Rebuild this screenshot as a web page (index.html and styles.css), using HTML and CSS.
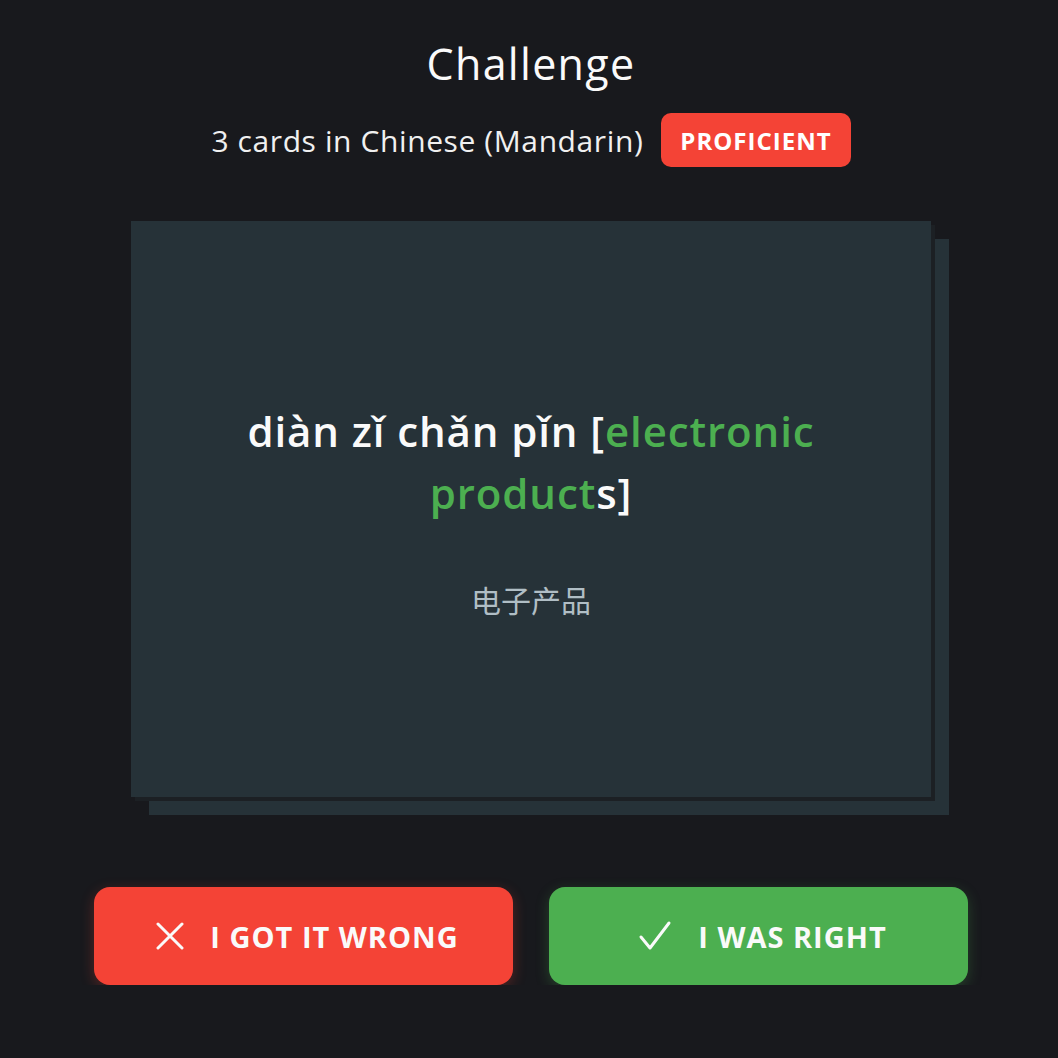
FILE: index.html
```html
<!DOCTYPE html>
<html lang="en">
<head>
<meta charset="utf-8">
<title>Challenge</title>
<link rel="stylesheet" href="styles.css">
</head>
<body>
<main class="page">
  <header class="head">
    <h1 class="title">Challenge</h1>
    <div class="sub">
      <span class="sub-text">3 cards in Chinese (Mandarin)</span>
      <span class="badge">PROFICIENT</span>
    </div>
  </header>

  <section class="deck">
    <div class="card">
      <p class="term">diàn zǐ chǎn pǐn [<span class="hl">electronic</span><br><span class="hl">product</span>s]</p>
      <p class="hanzi">电子产品</p>
    </div>
  </section>

  <div class="actions">
    <button class="btn btn-wrong" type="button">
      <svg class="ico" width="28" height="28" viewBox="0 0 28 28" aria-hidden="true"><path d="M2 2 L26 26 M26 2 L2 26" fill="none" stroke="currentColor" stroke-width="3" stroke-linecap="round"/></svg>
      <span>I GOT IT WRONG</span>
    </button>
    <button class="btn btn-right" type="button">
      <svg class="ico" width="34" height="32" viewBox="0 0 34 32" aria-hidden="true"><path d="M3 17 L12 28 L31 3" fill="none" stroke="currentColor" stroke-width="3" stroke-linecap="round" stroke-linejoin="round"/></svg>
      <span>I WAS RIGHT</span>
    </button>
  </div>
</main>
</body>
</html>
```

FILE: styles.css
```css
* { box-sizing: border-box; }
html, body {
  margin: 0;
  padding: 0;
  background: #18191d;
}
body {
  font-family: "Open Sans", "Noto Sans CJK SC", sans-serif;
  color: #fafafa;
}
.page {
  width: 874px;
  margin-left: 94px;
  padding-top: 35px;
  display: flex;
  flex-direction: column;
  align-items: center;
}
.head {
  display: flex;
  flex-direction: column;
  align-items: center;
}
.title {
  margin: 0;
  font-size: 43px;
  font-weight: 500;
  line-height: 58px;
  letter-spacing: 1.3px;
  color: #fafafa;
}
.sub {
  margin-top: 20px;
  display: flex;
  align-items: center;
  gap: 18px;
}
.sub-text {
  font-size: 30px;
  font-weight: 400;
  letter-spacing: 0.6px;
  color: #f0f0f0;
}
.badge {
  background: #f44336;
  color: #fff;
  font-weight: 700;
  font-size: 24px;
  letter-spacing: 1px;
  height: 54px;
  padding: 0 19px;
  border-radius: 10px;
  display: flex;
  align-items: center;
}
.deck {
  margin-top: 54px;
  position: relative;
  width: 800px;
  height: 576px;
}
.deck::before {
  content: "";
  position: absolute;
  left: 18px;
  top: 18px;
  width: 800px;
  height: 576px;
  background: #263238;
}
.card {
  position: relative;
  width: 800px;
  height: 576px;
  background: #263238;
  box-shadow: 4px 4px 0 #1c2024;
  display: flex;
  flex-direction: column;
  align-items: center;
  justify-content: center;
  text-align: center;
  padding: 0 30px;
}
.term {
  margin: 0;
  font-size: 42px;
  font-weight: 600;
  line-height: 62px;
  letter-spacing: 0.9px;
  color: #fafafa;
}
.hl { color: #4caf50; }
.hanzi {
  margin: 55px 0 0;
  font-size: 30px;
  line-height: 40px;
  color: #b0bec5;
  font-family: "Noto Sans CJK SC", sans-serif;
}
.actions {
  margin-top: 90px;
  width: 100%;
  display: grid;
  grid-template-columns: 1fr 1fr;
  gap: 36px;
}
.btn {
  height: 98px;
  border: 0;
  border-radius: 16px;
  display: flex;
  align-items: center;
  justify-content: center;
  gap: 26px;
  padding-left: 14px;
  font-family: "Open Sans", sans-serif;
  font-weight: 700;
  font-size: 29px;
  letter-spacing: 1px;
  color: #fafafa;
  cursor: pointer;
}
.btn-wrong {
  background: #f44336;
  box-shadow: 0 4px 14px rgba(244, 67, 54, 0.28);
}
.btn-right {
  background: #4caf50;
  box-shadow: 0 4px 14px rgba(76, 175, 80, 0.28);
}
.ico { display: block; }
```
